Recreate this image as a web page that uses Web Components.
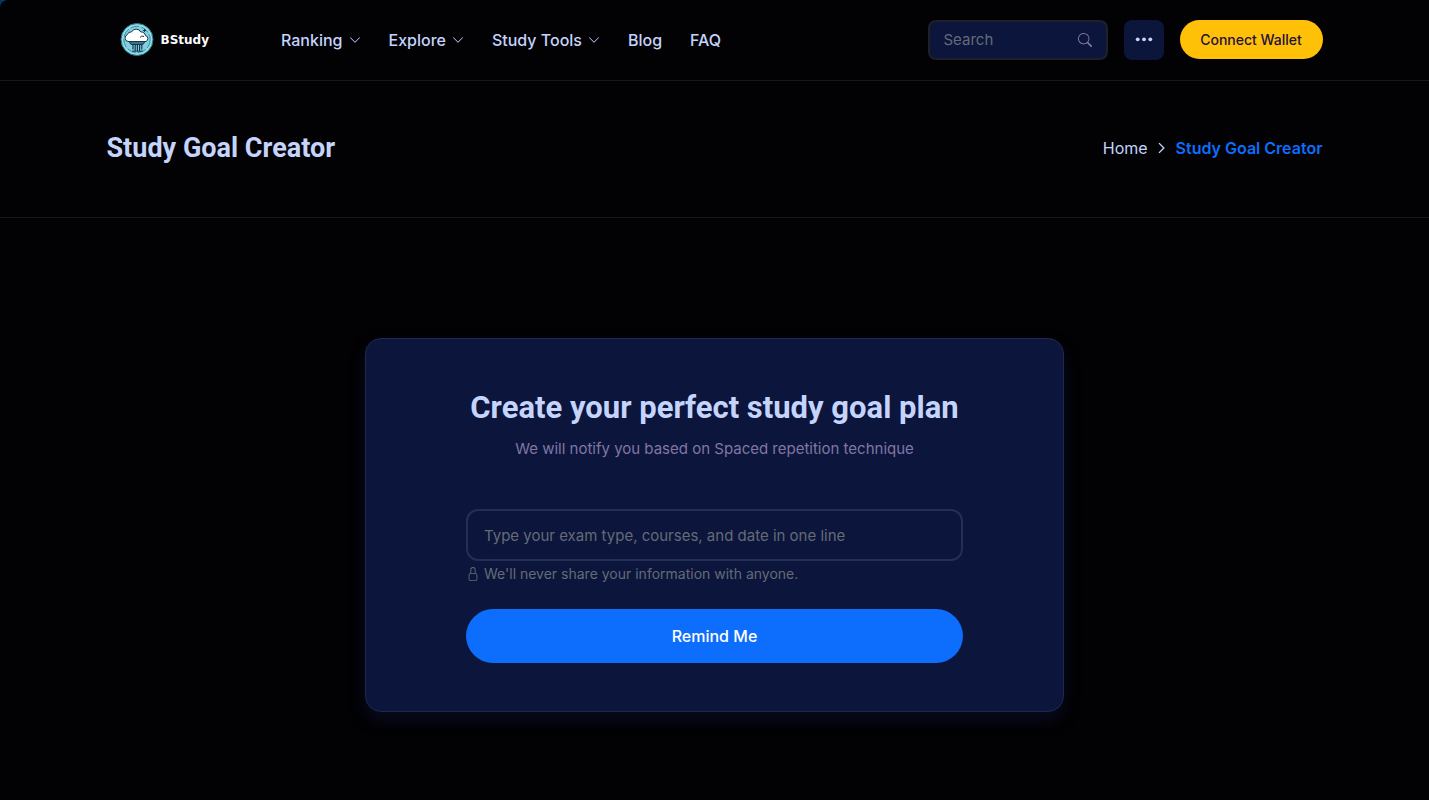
<!DOCTYPE html>
<html lang="en">
<head>
<meta charset="utf-8">
<meta name="viewport" content="width=device-width, initial-scale=1">
<title>Study Goal Creator - BStudy</title>
<style>
  html { background: linear-gradient(#003b6e, #020205 24px); }
  body {
    --page: #020204; --panel: #0c153b; --text: #c4d4fc; --blue: #0d6efd;
    --line: #17171b; --muted: #8077a6; --grey: #646b77;
    --heading: Roboto, "Liberation Sans", sans-serif;
    margin: 0; min-height: 100vh; background: var(--page); color: var(--text);
    border-top-left-radius: 8px;
    font: 16px/24px Inter, "Liberation Sans", sans-serif;
  }
</style>
</head>
<body>
<bs-page></bs-page>
<script>
const define = (name, html, setup) => customElements.define(name, class extends HTMLElement {
  constructor() {
    super();
    const t = document.createElement('template');
    t.innerHTML = html;
    this.attachShadow({ mode: 'open' }).append(t.content.cloneNode(true));
  }
  connectedCallback() { if (setup) setup(this, this.shadowRoot); }
});

const ICONS = {
  'chevron-down': '<path fill-rule="evenodd" d="M1.646 4.646a.5.5 0 0 1 .708 0L8 10.293l5.646-5.647a.5.5 0 0 1 .708.708l-6 6a.5.5 0 0 1-.708 0l-6-6a.5.5 0 0 1 0-.708z"/>',
  'chevron-right': '<path d="M4 1.500 10.500 8 4 14.500" fill="none" stroke="currentColor" stroke-width="1.800"/>',
  search: '<path d="M11.742 10.344a6.500 6.500 0 1 0-1.397 1.398h-.001c.03.04.062.078.098.115l3.850 3.850a1 1 0 0 0 1.415-1.414l-3.850-3.850a1.007 1.007 0 0 0-.115-.1zM12 6.500a5.500 5.500 0 1 1-11 0 5.500 5.500 0 0 1 11 0z"/>',
  dots: '<circle cx="2.400" cy="7.400" r="1.700"/><circle cx="8" cy="7.400" r="1.700"/><circle cx="13.600" cy="7.400" r="1.700"/>',
  lock: '<path d="M8 1a2 2 0 0 1 2 2v4H6V3a2 2 0 0 1 2-2zm3 6V3a3 3 0 0 0-6 0v4a2 2 0 0 0-2 2v5a2 2 0 0 0 2 2h6a2 2 0 0 0 2-2V9a2 2 0 0 0-2-2zM5 8h6a1 1 0 0 1 1 1v5a1 1 0 0 1-1 1H5a1 1 0 0 1-1-1V9a1 1 0 0 1 1-1z"/>'
};

define('bs-icon', `
  <style>
    :host { display: inline-flex; width: 16px; height: 16px; flex: none; }
    svg { width: 100%; height: 100%; fill: currentColor; }
  </style>
  <svg viewBox="0 0 16 16" aria-hidden="true"></svg>`,
  (el, root) => { root.querySelector('svg').innerHTML = ICONS[el.getAttribute('name')] || ''; });

define('bs-container', `
  <style>
    :host { display: block; }
    div { max-width: 1216px; margin: 0 auto; padding: 0 24px; display: flex; align-items: center; justify-content: var(--justify, flex-start); }
  </style>
  <div><slot></slot></div>`);

define('bs-logo', `
  <style>
    :host { display: block; }
    a { display: flex; align-items: center; gap: 7px; color: #fff; text-decoration: none; font: 700 12px/20px "DejaVu Sans", sans-serif; }
    svg { width: 34px; height: 34px; flex: none; }
  </style>
  <a href="#">
    <svg viewBox="0 0 34 34" aria-hidden="true">
      <circle cx="17" cy="16.500" r="16" fill="#8fdcea" stroke="#2a6f85" stroke-width="1"/>
      <circle cx="17" cy="16.500" r="13.200" fill="#84cfdf" stroke="#3b8ba1" stroke-width="1" stroke-dasharray="9 2"/>
      <path d="M9 18.500h16l-2 3H11z" fill="#3f6f88" stroke="#16384f"/>
      <path d="M13 21.500v5M15.200 21.500v6.500M17.400 21.500v6.500M19.600 21.500v6.500M21.800 21.500v5" stroke="#16384f" stroke-width="1.200"/>
      <path d="M12 28.200h11" stroke="#16384f" stroke-width="1"/>
      <path d="M8 18.500a3.600 3.600 0 0 1-.6-6.900 3.500 3.500 0 0 1 4-2.600 5.300 5.300 0 0 1 9.400 0 4 4 0 0 1 4.600 3.600 3.100 3.100 0 0 1 .6 5.900z" fill="#fff" stroke="#16384f" stroke-width="1"/>
      <path d="M20 14.500a3 3 0 0 1 4-1M24.500 6v3M23 7.500h3" fill="none" stroke="#16384f" stroke-width="1"/>
    </svg>
    <span>BStudy</span>
  </a>`);

define('bs-nav-item', `
  <style>
    :host { display: block; }
    a { display: flex; align-items: center; gap: 6px; color: var(--text); text-decoration: none; font-size: 16px; line-height: 24px; font-weight: 500; white-space: nowrap; }
    bs-icon { width: 12px; height: 12px; }
    :host(:not([menu])) bs-icon { display: none; }
  </style>
  <a href="#"><slot></slot><bs-icon name="chevron-down"></bs-icon></a>`);

define('bs-search', `
  <style>
    :host { display: block; width: 180px; }
    form { display: flex; align-items: center; box-sizing: border-box; height: 40px; padding: 0 14px; border: 2px solid #202128; border-radius: 8px; background: var(--panel); }
    input { flex: 1; min-width: 0; padding: 0; border: 0; outline: 0; background: none; color: var(--text); font: inherit; font-size: 15px; }
    input::placeholder { color: var(--grey); opacity: 1; }
    button { display: flex; padding: 0; border: 0; background: none; color: var(--muted); }
    bs-icon { width: 14px; height: 14px; }
  </style>
  <form role="search">
    <input type="text" placeholder="Search" aria-label="Search">
    <button type="button" aria-label="Submit search"><bs-icon name="search"></bs-icon></button>
  </form>`);

define('bs-header', `
  <style>
    :host { display: block; border-bottom: 1px solid var(--line); }
    bs-container { padding: 20px 0; }
    bs-logo { margin: 0 72px 0 13px; }
    nav { display: flex; gap: 28px; }
    .tools { display: flex; align-items: flex-start; gap: 16px; margin-left: auto; }
    .more { width: 40px; height: 40px; display: flex; align-items: center; justify-content: center; padding: 0; border: 0; border-radius: 8px; background: var(--panel); color: var(--text); }
    .more bs-icon { width: 18px; height: 18px; }
    .wallet { min-width: 143px; padding: 0 20px; height: 39px; border: 0; border-radius: 20px; background: #ffc107; color: #24103c; font: inherit; font-size: 14px; font-weight: 500; white-space: nowrap; }
  </style>
  <bs-container>
    <bs-logo></bs-logo>
    <nav aria-label="Main">
      <bs-nav-item menu>Ranking</bs-nav-item>
      <bs-nav-item menu>Explore</bs-nav-item>
      <bs-nav-item menu>Study Tools</bs-nav-item>
      <bs-nav-item>Blog</bs-nav-item>
      <bs-nav-item>FAQ</bs-nav-item>
    </nav>
    <div class="tools">
      <bs-search></bs-search>
      <button class="more" type="button" aria-label="More"><bs-icon name="dots"></bs-icon></button>
      <button class="wallet" type="button">Connect Wallet</button>
    </div>
  </bs-container>`);

define('bs-breadcrumb', `
  <style>
    :host { display: block; border-bottom: 1px solid var(--line); }
    bs-container { --justify: space-between; padding: 48px 0 50px; }
    h1 { margin: 0; font: 700 27px/38px var(--heading); }
    nav { display: flex; align-items: center; gap: 8px; }
    a { color: var(--text); text-decoration: none; }
    strong { color: var(--blue); font-weight: 600; }
    bs-icon { width: 12px; height: 12px; }
  </style>
  <bs-container>
    <h1>Study Goal Creator</h1>
    <nav aria-label="Breadcrumb">
      <a href="#">Home</a><bs-icon name="chevron-right"></bs-icon><strong>Study Goal Creator</strong>
    </nav>
  </bs-container>`);

define('bs-goal-card', `
  <style>
    :host { display: block; box-sizing: border-box; flex: 0 1 699px; min-width: 0; padding: 48px 100px; border: 1px solid #1f284d; border-radius: 16px; background: var(--panel); box-shadow: 0 8px 16px rgba(17, 26, 72, .4); }
    h2 { margin: 0; font: 700 31px/42px var(--heading); text-align: center; }
    p { margin: 8px 0 48px; font-size: 15px; line-height: 24px; color: var(--muted); text-align: center; }
    input { display: block; box-sizing: border-box; width: 100%; height: 52px; padding: 0 16px; border: 2px solid #252e54; border-radius: 12px; background: none; color: var(--text); font: inherit; font-size: 15px; }
    input::placeholder { color: var(--grey); opacity: 1; }
    small { display: flex; align-items: center; gap: 4px; margin: 2px 0 24px; font-size: 14px; line-height: 22px; color: var(--grey); }
    bs-icon { width: 14px; height: 14px; }
    button { display: block; width: 100%; height: 54px; border: 0; border-radius: 27px; background: var(--blue); color: #fff; font: inherit; font-weight: 500; }
  </style>
  <form>
    <h2>Create your perfect study goal plan</h2>
    <p>We will notify you based on Spaced repetition technique</p>
    <input type="text" aria-label="Study goal" aria-describedby="note" placeholder="Type your exam type, courses, and date in one line">
    <small id="note"><bs-icon name="lock"></bs-icon>We'll never share your information with anyone.</small>
    <button type="button">Remind Me</button>
  </form>`);

define('bs-page', `
  <style>
    :host { display: block; }
    main bs-container { --justify: center; padding: 120px 0 80px; }
  </style>
  <bs-header></bs-header>
  <main>
    <bs-breadcrumb></bs-breadcrumb>
    <bs-container><bs-goal-card></bs-goal-card></bs-container>
  </main>`);
</script>
</body>
</html>
